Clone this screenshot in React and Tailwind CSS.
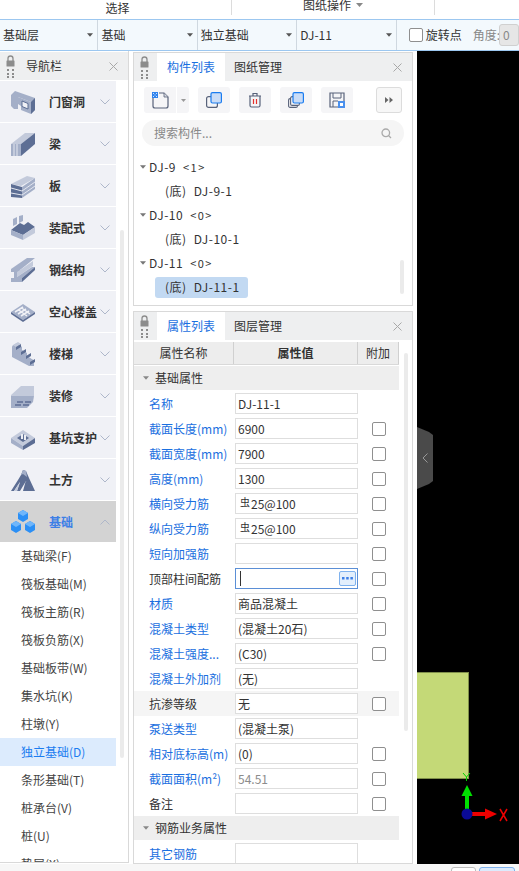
import React from "react";

const L = "#a4afc8", D = "#5d6e94", M = "#c3cadb";

function NavIcon({ name }) {
  const common = { width: 26, height: 26, viewBox: "0 0 26 26" };
  switch (name) {
    case "door":
      return (<svg {...common}><path d="M1 6 L5 2 L25 9 V21 L21 25 V13 L8 8 V20 L4 20 L1 17Z" fill={L}/><path d="M21 13 L25 9 V21 L21 25Z" fill={D}/><path d="M8 8 L21 13 V25 L11 21 V17 L8 15Z" fill={L}/><path d="M12 12 L18 14.500 V20 L12 17.500Z" fill="#f0f1f6" stroke={D}/></svg>);
    case "beam":
      return (<svg {...common}><path d="M1 13 L10 23 V13 L1 13Z" fill={L}/><path d="M1 13 H11 V25 H1Z" fill={L}/><path d="M1 13 L15 2 H25 L11 13Z" fill={M}/><path d="M11 13 L25 2 V13 L11 25Z" fill={D}/><path d="M4 13V25M7 13V25" stroke="#e4e7f0"/></svg>);
    case "slab":
      return (<svg {...common}><path d="M1 11 L17 3 L25 5 L11 13 L1 11Z" fill={M}/><path d="M1 11 L12 14 V25 L1 24Z" fill={D}/><path d="M12 14 L25 5 V16 L12 25Z" fill={L}/><path d="M1 15 L12 18 L25 9M1 20 L12 22 L25 13" stroke="#e4e7f0" fill="none"/></svg>);
    case "prefab":
      return (<svg {...common}><path d="M1 15 L10 8 L14 10 L18 7 L25 12 L13 20Z" fill={D}/><path d="M1 15 L13 20 V25 L1 20Z" fill={L}/><path d="M13 20 L25 12 V18 L13 25Z" fill={M}/><path d="M3 4 L7 2 V9 L3 11ZM9 1 L13 0 V6 L9 8Z" fill={L}/></svg>);
    case "steel":
      return (<svg {...common}><path d="M1 12 L17 1 H25 L10 13Z" fill={L}/><path d="M1 12 H10 V15 H1Z" fill={L}/><path d="M7 15 L10 13 L23 4 V9 L7 20Z" fill={M}/><path d="M7 20 L22 10 H25 L12 21 H7Z" fill={L}/><path d="M4 15 H7 V21 H4Z" fill={L}/><path d="M1 21 H12 V25 H1Z" fill={L}/><path d="M12 21 L25 10 V13 L12 25Z" fill={D}/></svg>);
    case "hollow":
      return (<svg {...common}><path d="M1 13 L13 5 L25 13 L13 21Z" fill={L}/><path d="M1 13 L13 21 L25 13 V15 L13 23 L1 15Z" fill={D}/><path d="M5 13 L13 8 M8 15 L16 10 M11 17 L19 12 M8 10.500 L17 17 M11 8.500 L20 15" stroke="#f0f1f6" strokeWidth="1.500"/></svg>);
    case "stairs":
      return (<svg {...common}><path d="M2 5 L24 20 V25 L19 25 L2 16Z" fill={L}/><path d="M2 5 L7 2 L12 6 V9 L17 12 V15 L25 20 L20 22 Z" fill={L}/><path d="M3 4 L8 1 L11 3 L6 6Z" fill={M}/><path d="M6 6 L11 3 V6 L6 9Z M11 11 L16 8 V11 L11 14Z M16 15 L21 12 V15 L16 18Z M20 21 L25 18 V21 L20 24Z" fill={D}/></svg>);
    case "deco":
      return (<svg {...common}><path d="M1 12 L11 3 H24 V13 H8 L1 19Z" fill={M}/><path d="M1 13 L9 13 L9 16 L1 19Z" fill={L}/><path d="M1 18 L9 13 H24 L23 19 L17 25 H1Z" fill={L}/><path d="M7 19 H13 M15 19 H21 M5 22 H11 M13 22 H19" stroke={D} strokeWidth="1.500"/></svg>);
    case "pit":
      return (<svg {...common}><path d="M1 13 L13 5 L25 13 L13 21Z" fill={M}/><path d="M1 13 L13 21 V25 L1 18Z" fill={L}/><path d="M13 21 L25 13 V18 L13 25Z" fill={D}/><path d="M7 13 L13 9 L19 13 L13 17Z" fill={D}/><path d="M11 9 H13 V14 H11ZM14 10 H16 V15 H14Z" fill="#eceef4"/></svg>);
    case "earth":
      return (<svg {...common}><path d="M1 24 L8 13 L11 8 L13 3 L16 4 L19 11 L25 24 H20 L16 14 L10 24 H7 L10 15 L4 24Z" fill={D}/><path d="M13 24 L16 13 L21 24Z" fill={D}/><path d="M4 24 L10 15 L7 24Z" fill={M}/><path d="M11 8 L13 3 L16 4 L17 10 L13 7Z" fill={L}/></svg>);
    default:
      return (<svg {...common}><path d="M13 1 L18 4 V10 L13 13 L8 10 V4Z" fill="#2b8ff5"/><path d="M6 12 L11 15 V21 L6 24 L1 21 V15Z" fill="#2b8ff5"/><path d="M20 12 L25 15 V21 L20 24 L15 21 V15Z" fill="#2b8ff5"/><path d="M13 1 L18 4 L13 7 L8 4Z M6 12 L11 15 L6 18 L1 15Z M20 12 L25 15 L20 18 L15 15Z" fill="#6fb6fb"/></svg>);
  }
}

function Grip() {
  return (
    <svg width="9" height="23" viewBox="0 0 9 23" className="shrink-0">
      <path d="M2 6 V3.500 A2.500 2.500 0 0 1 7 3.500 V6" fill="none" stroke="#8c8c8c" strokeWidth="1.300"/>
      <rect x="0.500" y="5.500" width="8" height="6" rx="0.500" fill="#8c8c8c"/>
      {[14, 18, 21].map((y) => (
        <g key={y} fill="#8c8c8c"><rect x="1" y={y} width="2" height="2"/><rect x="6" y={y} width="2" height="2"/></g>
      ))}
    </svg>
  );
}

function Close() {
  return (
    <svg width="9" height="9" viewBox="0 0 9 9" className="shrink-0">
      <path d="M0.500 0.500 L8.500 8.500 M8.500 0.500 L0.500 8.500" stroke="#a8a8a8" strokeWidth="1"/>
    </svg>
  );
}

function Caret({ color = "#666", w = 7, h = 4 }) {
  return (
    <svg width={w} height={h} viewBox="0 0 7 4" className="shrink-0"><path d="M0 0 H7 L3.500 4Z" fill={color}/></svg>
  );
}

function Chevron({ up }) {
  return (
    <svg width="10" height="6" viewBox="0 0 10 6" className="shrink-0">
      <path d={up ? "M0.500 5.500 L5 1 L9.500 5.500" : "M0.500 0.500 L5 5 L9.500 0.500"} fill="none" stroke="#aeb7ca" strokeWidth="1"/>
    </svg>
  );
}

const navItems = [
  ["door", "门窗洞"], ["beam", "梁"], ["slab", "板"], ["prefab", "装配式"], ["steel", "钢结构"],
  ["hollow", "空心楼盖"], ["stairs", "楼梯"], ["deco", "装修"], ["pit", "基坑支护"], ["earth", "土方"],
];
const subItems = ["基础梁(F)", "筏板基础(M)", "筏板主筋(R)", "筏板负筋(X)", "基础板带(W)", "集水坑(K)", "柱墩(Y)", "独立基础(D)", "条形基础(T)", "桩承台(V)", "桩(U)", "垫层(X)"];

function Nav() {
  return (
    <aside className="relative w-[129px] shrink-0 h-[812px] border-r border-b border-[#d9d9d9] overflow-hidden bg-white">
      <div className="flex items-center h-[28px] bg-[#eeeff0] pl-[6px] pr-[10px] mt-px">
        <Grip />
        <span className="ml-[11px] flex-1 text-[#333]">导航栏</span>
        <Close />
      </div>
      <div className="mt-px flex flex-col gap-px w-[116px]">
        {navItems.map(([icon, label]) => (
          <div key={label} className="flex items-center h-[41px] bg-[#f0f1f6] pl-[10px]">
            <span className="w-[26px] shrink-0 flex"><NavIcon name={icon} /></span>
            <span className="ml-[13px] w-[51px] shrink-0 font-semibold text-[#333] whitespace-nowrap">{label}</span>
            <span className="flex"><Chevron /></span>
          </div>
        ))}
        <div className="flex items-center h-[41px] bg-[#d3d3d3] pl-[10px]">
          <span className="w-[26px] shrink-0 flex"><NavIcon name="found" /></span>
          <span className="ml-[13px] w-[51px] shrink-0 font-semibold text-[#3d7fe6]">基础</span>
          <span className="flex"><Chevron up /></span>
        </div>
      </div>
      <div className="w-[116px]">
        {subItems.map((s) => (
          <div key={s} className={"flex items-center h-[28px] pl-[21px] whitespace-nowrap " + (s.startsWith("独立") ? "bg-[#dcebfd] text-[#1a7cf0]" : "text-[#444]")}>{s}</div>
        ))}
      </div>
      <div className="absolute left-[120px] top-[179px] w-[4px] h-[528px] rounded-sm bg-[#ebebeb]" />
    </aside>
  );
}

function Btn({ children, className = "" }) {
  return <div className={"flex items-center justify-center h-[26px] bg-[#f5f5f7] rounded-[3px] " + className}>{children}</div>;
}

const IC = { s: "#58627a", b: "#1a7cf0", f: "#c9dcf7" };

function ToolBar() {
  return (
    <div className="flex items-center h-[26px] mt-[6px] pl-[10px]">
      <Btn className="w-[32px] rounded-r-none">
        <svg width="17" height="17" viewBox="0 0 17 17">
          <path d="M1 6 V14 Q1 16 3 16 H14 Q16 16 16 14 V5 L12 1 H7" fill="none" stroke={IC.s} strokeWidth="1.200"/>
          <path d="M12 1 V5 H16" fill="#d5d8e0" stroke={IC.s} strokeWidth="0.800"/>
          <rect x="0" y="0" width="6" height="6" fill="#2f83ee"/>
          <path d="M1 1h1v1H1zM4 1h1v1H4zM2.500 2.500h1v1h-1zM1 4h1v1H1zM4 4h1v1H4z" fill="#cfe2fb"/>
        </svg>
      </Btn>
      <Btn className="w-[12px] ml-px rounded-l-none"><Caret color="#999" w={5} h={3} /></Btn>
      <Btn className="w-[32px] ml-[9px]">
        <svg width="16" height="16" viewBox="0 0 16 16">
          <rect x="0.600" y="4.600" width="10.800" height="10.800" rx="2" fill="none" stroke={IC.s} strokeWidth="1.200"/>
          <rect x="5" y="0.600" width="10.400" height="10.400" rx="1.500" fill={IC.f} stroke={IC.b} strokeWidth="1.200"/>
        </svg>
      </Btn>
      <Btn className="w-[32px] ml-[9px]">
        <svg width="14" height="16" viewBox="0 0 14 16">
          <path d="M1 4 H13 M5 4 V1.500 H9 V4 M2 4 V13.500 Q2 15 3.500 15 H10.500 Q12 15 12 13.500 V4" fill="none" stroke={IC.s} strokeWidth="1.200"/>
          <path d="M5.500 7 V12 M8.500 7 V12" stroke="#e5322d" strokeWidth="1.200"/>
        </svg>
      </Btn>
      <Btn className="w-[32px] ml-[9px]">
        <svg width="16" height="16" viewBox="0 0 16 16">
          <rect x="0.600" y="6.600" width="8.800" height="8.800" rx="1.500" fill="none" stroke={IC.s} strokeWidth="1.100"/>
          <rect x="2.600" y="4.600" width="8.800" height="8.800" rx="1.500" fill="#f5f5f7" stroke={IC.s} strokeWidth="1.100"/>
          <rect x="5" y="0.600" width="10.400" height="10.400" rx="1.500" fill={IC.f} stroke={IC.b} strokeWidth="1.200"/>
        </svg>
      </Btn>
      <Btn className="w-[32px] ml-[9px]">
        <svg width="16" height="16" viewBox="0 0 16 16">
          <path d="M9 15 H1 V1 H15 V9" fill="none" stroke={IC.s} strokeWidth="1.200"/>
          <path d="M4 1 V6 H12 V1 M4 15 V9 H9" fill="none" stroke={IC.s} strokeWidth="1"/>
          <rect x="9" y="9" width="7" height="7" fill="#4a90ee"/>
          <rect x="11" y="11" width="3" height="3" fill="#fff"/>
        </svg>
      </Btn>
      <Btn className="w-[26px] ml-[23px] bg-[#f7f7f7] border border-[#dcdcdc]">
        <svg width="8" height="6" viewBox="0 0 8 6"><path d="M0 0 L3.500 3 L0 6Z M4.500 0 L8 3 L4.500 6Z" fill="#666"/></svg>
      </Btn>
    </div>
  );
}

function Tree() {
  const rows = [
    ["DJ-9", "<1>", "DJ-9-1"],
    ["DJ-10", "<0>", "DJ-10-1"],
    ["DJ-11", "<0>", "DJ-11-1"],
  ];
  return (
    <div className="mt-[9px] pl-[6px] flex flex-col tracking-[0.5px]">
      {rows.map(([a, b, c], i) => (
        <React.Fragment key={a}>
          <div className="flex items-center h-[24px] text-[#333]">
            <Caret color="#777" w={6} h={4} />
            <span className="ml-[3px]">{a}</span>
            <span className="ml-[7px] text-[11px] tracking-[1.500px]">{b}</span>
          </div>
          <div className="flex items-center h-[24px]">
            <div className={"flex items-center h-[21px] w-[93px] ml-[15px] pl-[10px] rounded-[3px] text-[#333] whitespace-nowrap " + (i === 2 ? "bg-[#c2d9f2]" : "")}>
              <span>(底)</span><span className="ml-[7px]">{c}</span>
            </div>
          </div>
        </React.Fragment>
      ))}
    </div>
  );
}

function Tabs({ a, b }) {
  return (
    <div className="flex items-center h-[28px] bg-[#eeeff0] pl-[6px] pr-[10px]">
      <Grip />
      <div className="ml-[8px] w-[68px] h-full bg-white flex items-center justify-center text-[#1a6fe0]">{a}</div>
      <span className="ml-[9px] flex-1 text-[#333]">{b}</span>
      <Close />
    </div>
  );
}

function ComponentPanel() {
  return (
    <section className="relative h-[254px] border border-[#d9d9d9] overflow-hidden bg-white">
      <Tabs a="构件列表" b="图纸管理" />
      <ToolBar />
      <div className="mx-[8px] mt-[7px] h-[26px] rounded-full bg-[#f5f5f5] flex items-center pl-[12px] pr-[12px] text-[#888]">
        <span className="flex-1">搜索构件...</span>
        <svg width="11" height="11" viewBox="0 0 11 11"><circle cx="4.800" cy="4.800" r="3.800" fill="none" stroke="#aaa" strokeWidth="1.300"/><path d="M7.500 7.500 L10 10" stroke="#aaa" strokeWidth="1.300"/></svg>
      </div>
      <Tree />
      <div className="absolute left-[266px] top-[207px] w-[4px] h-[34px] rounded-sm bg-[#ebebeb]" />
    </section>
  );
}

const B = "text-[#1a6fe0]";
const props = [
  { l: "名称", v: "DJ-11-1", blue: 1, nocheck: 1 },
  { l: "截面长度(mm)", v: "6900", blue: 1 },
  { l: "截面宽度(mm)", v: "7900", blue: 1 },
  { l: "高度(mm)", v: "1300", blue: 1 },
  { l: "横向受力筋", v: "25@100", rebar: 1, blue: 1 },
  { l: "纵向受力筋", v: "25@100", rebar: 1, blue: 1 },
  { l: "短向加强筋", v: "", blue: 1 },
  { l: "顶部柱间配筋", v: "", focus: 1 },
  { l: "材质", v: "商品混凝土", blue: 1 },
  { l: "混凝土类型", v: "(混凝土20石)", blue: 1 },
  { l: "混凝土强度...", v: "(C30)", blue: 1 },
  { l: "混凝土外加剂", v: "(无)", blue: 1, nocheck: 1 },
  { l: "抗渗等级", v: "无", shade: 1 },
  { l: "泵送类型", v: "(混凝土泵)", blue: 1, nocheck: 1 },
  { l: "相对底标高(m)", v: "(0)", blue: 1 },
  { l: "截面面积(m²)", v: "54.51", blue: 1, gray: 1 },
  { l: "备注", v: "" },
];

function Row({ p }) {
  return (
    <div className={"flex items-center h-[25px] " + (p.shade ? "bg-[#f5f5f5]" : "")}>
      <span className={"pl-[15px] w-[101px] shrink-0 whitespace-nowrap " + (p.blue ? B : "text-[#333]")}>{p.l}</span>
      <div className={"relative flex items-center w-[123px] h-[21px] shrink-0 border bg-white pl-[2px] whitespace-nowrap " + (p.focus ? "border-[#5b8fd6]" : "border-[#dedede]") + " " + (p.gray ? "text-[#8c8c8c]" : "text-[#333]")}>
        {p.rebar ? <span className="text-[10px] mr-[1px] ml-[2px] -mt-[3px]">虫</span> : null}
        {p.v}
        {p.focus ? <span className="w-px h-[15px] bg-[#333] ml-[2px]" /> : null}
        {p.focus ? (
          <span className="absolute right-[1px] top-[2px] w-[17px] h-[15px] rounded-[2px] bg-[#e3effc] border border-[#7fb2ee] flex items-center justify-center">
            <svg width="11" height="3" viewBox="0 0 11 3"><path d="M0 0h2.500v2.500H0zM4.200 0h2.500v2.500H4.200zM8.400 0h2.500v2.500H8.400z" fill="#3d7fe6"/></svg>
          </span>
        ) : null}
      </div>
      <span className="ml-[14px] w-[14px] h-[14px] shrink-0 flex">
        {p.nocheck ? null : <span className="w-[14px] h-[14px] rounded-[2px] border border-[#8f8f8f] bg-white" />}
      </span>
    </div>
  );
}

function Group({ t }) {
  return (
    <div className="flex items-center h-[24px] bg-[#eeeeee] pl-[9px] mb-px">
      <Caret color="#888" w={6} h={4} />
      <span className="ml-[6px] text-[#333]">{t}</span>
    </div>
  );
}

function PropsPanel() {
  return (
    <section className="relative mt-[5px] h-[553px] border border-[#d9d9d9] overflow-hidden bg-white">
      <Tabs a="属性列表" b="图层管理" />
      <div className="w-[265px]">
        <div className="flex h-[23px] mt-[2px] bg-[#ededed] border-b border-[#d9d9d9] text-[#333]">
          <div className="w-[100px] flex items-center justify-center border-r border-[#d0d0d0]">属性名称</div>
          <div className="w-[124px] flex items-center justify-center border-r border-[#d0d0d0] font-semibold">属性值</div>
          <div className="flex-1 flex items-center justify-center border-r border-[#d0d0d0]">附加</div>
        </div>
        <div className="mt-px">
          <Group t="基础属性" />
        </div>
        {props.map((p) => <Row key={p.l} p={p} />)}
        <Group t="钢筋业务属性" />
        <Row p={{ l: "其它钢筋", v: "", blue: 1, nocheck: 1 }} />
      </div>
      <div className="absolute left-[270px] top-[41px] w-[4px] h-[378px] rounded-sm bg-[#ebebeb]" />
    </section>
  );
}

function Viewport() {
  return (
    <main className="relative ml-[4px] flex-1 h-[813px] bg-black overflow-hidden">
      <div className="absolute left-0 top-[621px] w-[52px] h-[107px] bg-[#c4d977] border-t border-r border-b border-[#7f8f4a]" />
      <div className="absolute left-0 top-[376px] w-[16px] h-[62px] flex items-center justify-center bg-[#4a4a4a] [clip-path:polygon(0_0,75%_8%,100%_13%,100%_87%,75%_92%,0_100%)]">
        <svg width="6" height="10" viewBox="0 0 6 10"><path d="M5.500 0.500 L1 5 L5.500 9.500" fill="none" stroke="#999" strokeWidth="1"/></svg>
      </div>
      <svg className="absolute left-[40px] top-[720px]" width="62" height="54" viewBox="0 0 62 54">
        <path d="M10 40 V22" stroke="#00e000" strokeWidth="4"/>
        <path d="M10 14 L15.500 25 H4.500Z" fill="#00e000"/>
        <path d="M12 43 H30" stroke="#ee0000" strokeWidth="4"/>
        <path d="M40 43 L28 37.500 V48.500Z" fill="#ee0000"/>
        <circle cx="10" cy="43" r="5.500" fill="#0a0a96"/>
        <path d="M6 2 L9.500 6 L13 2 M9.500 6 V10" stroke="#00d000" strokeWidth="1" fill="none"/>
        <path d="M43 38 L50 50 M50 38 L43 50" stroke="#ee0000" strokeWidth="1.500" fill="none"/>
      </svg>
    </main>
  );
}

function Drop({ t, w }) {
  return (
    <div className={"flex items-center h-full border-r border-[#cfd8e0] pr-[4px] " + w}>
      <span className="flex-1 pl-[3px] text-[#333] whitespace-nowrap">{t}</span>
      <Caret color="#555" w={6} h={4} />
    </div>
  );
}

export default function App() {
  return (
    <div className="w-[519px] h-[871px] overflow-hidden bg-white text-[12px] leading-none font-['Noto_Sans_CJK_SC','Noto_Sans',sans-serif] flex flex-col">
      <header className="flex h-[19px] shrink-0 text-[#333]">
        <div className="w-[232px] h-[15px] flex items-center justify-center border-r border-[#dcdcdc] pt-[1px] pl-[4px]">选择</div>
        <div className="w-[203px] h-[15px] flex items-start justify-center gap-[5px] border-r border-[#dcdcdc] overflow-hidden">
          <span className="-mt-[1px]">图纸操作</span>
          <span className="mt-[3px]"><Caret color="#888" /></span>
        </div>
      </header>
      <div className="flex items-center h-[32px] shrink-0 bg-[#f3f9fd] border-y border-[#9cc7f0]">
        <Drop t="基础层" w="w-[99px]" />
        <Drop t="基础" w="w-[100px]" />
        <Drop t="独立基础" w="w-[100px]" />
        <Drop t="DJ-11" w="w-[100px]" />
        <span className="ml-[12px] w-[14px] h-[14px] rounded-[2px] border border-[#8f8f8f] bg-white shrink-0" />
        <span className="ml-[3px] text-[#333] whitespace-nowrap">旋转点</span>
        <span className="ml-[11px] text-[#888] whitespace-nowrap">角度:</span>
        <span className="ml-[-1px] w-[20px] h-[22px] shrink-0 flex items-center pl-[3px] rounded-[3px] bg-[#e6e6e6] border border-[#d0d0d0] text-[#888]">0</span>
      </div>
      <div className="flex shrink-0">
        <Nav />
        <div className="ml-[4px] w-[280px] shrink-0 pt-px">
          <ComponentPanel />
          <PropsPanel />
        </div>
        <Viewport />
      </div>
      <footer className="flex-1 bg-[#f7f7f7] flex justify-end pr-[4px] pt-[3px] gap-[3px]">
        <span className="w-[25px] h-[8px] rounded-t-[3px] border border-[#bdbdbd] bg-white" />
        <span className="w-[36px] h-[8px] rounded-t-[3px] border border-[#7fb2ee] bg-[#dcebfd]" />
      </footer>
    </div>
  );
}
